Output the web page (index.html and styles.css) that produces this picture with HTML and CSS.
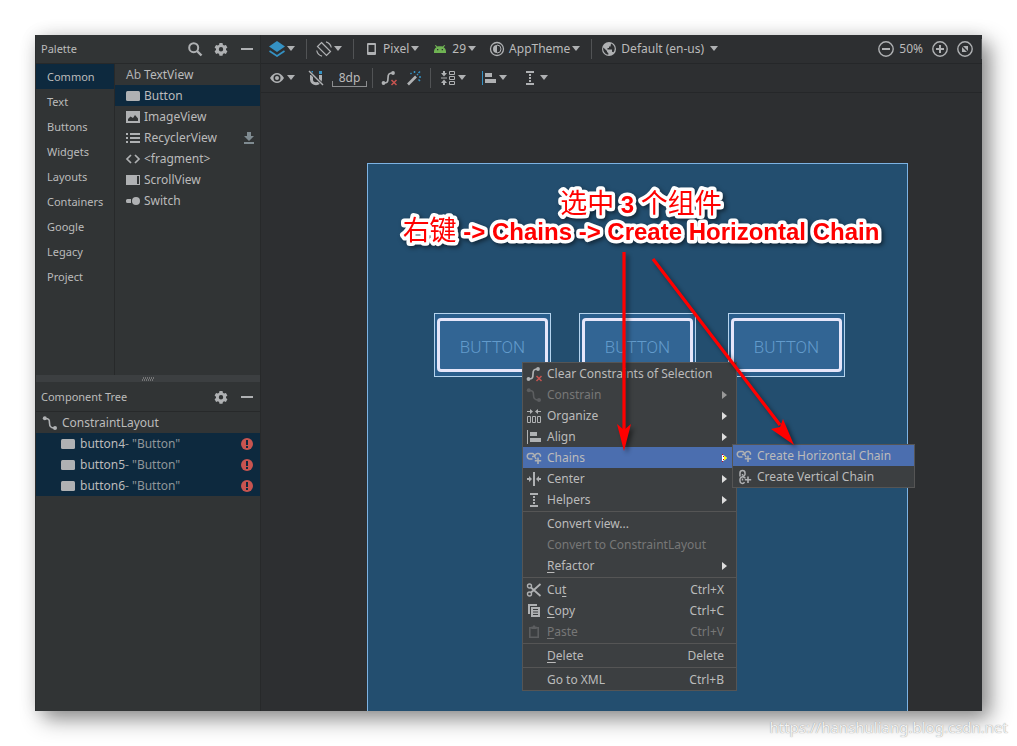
FILE: index.html
```html
<!DOCTYPE html>
<html lang="en">
<head>
<meta charset="utf-8">
<title>Layout Editor</title>
<link rel="stylesheet" href="styles.css">
</head>
<body>
<svg class="sprite" aria-hidden="true">
  <symbol id="caret" viewBox="0 0 8 5"><path d="M0 0h8L4 5z" fill="currentColor"/></symbol>
  <symbol id="arrow" viewBox="0 0 5 8"><path d="M0 0l5 4-5 4z" fill="currentColor"/></symbol>
  <symbol id="gear" viewBox="0 0 16 16"><path fill="currentColor" fill-rule="evenodd" d="M6.5 2h3l.4 1.8 1.2.7 1.8-.6 1.5 2.600-1.400 1.200v1.400l1.400 1.200-1.500 2.600-1.800-.6-1.200.7-.4 1.800h-3l-.4-1.800-1.200-.7-1.800.6-1.500-2.600L3 9.100V7.700L1.600 6.500l1.500-2.600 1.800.6 1.200-.7zM8 6a2.200 2.200 0 1 0 0 4.400A2.200 2.200 0 0 0 8 6z"/></symbol>
  <symbol id="minus" viewBox="0 0 16 16"><path d="M2 7h12v2H2z" fill="currentColor"/></symbol>
  <symbol id="box" viewBox="0 0 16 16"><rect x="1" y="3" width="14" height="10" rx="1.500" fill="currentColor"/></symbol>
  <symbol id="curve" viewBox="0 0 16 16"><path d="M3 3.500c4 0 4.500 1 4.500 4.500s1 5 5 5" fill="none" stroke="currentColor" stroke-width="1.600"/><circle cx="2.800" cy="3.300" r="2" fill="currentColor"/><circle cx="13" cy="13" r="2" fill="currentColor"/></symbol>
  <symbol id="clear" viewBox="0 0 16 16"><path d="M2.500 13c4 0 4.500-1 4.500-5s1-5 5-5" fill="none" stroke="currentColor" stroke-width="1.700"/><circle cx="2.500" cy="13" r="1.900" fill="currentColor"/><circle cx="12" cy="3" r="1.900" fill="currentColor"/><path d="M10.500 10l5 5m0-5l-5 5" stroke="#c75450" stroke-width="1.500"/></symbol>
  <symbol id="error" viewBox="0 0 12 12"><circle cx="6" cy="6" r="6" fill="#c75450"/><path d="M5 2h2v5H5zM5 8h2v2H5z" fill="#0d293e"/></symbol>
  <symbol id="align" viewBox="0 0 16 16"><path class="rule" d="M1 1h1v14H1z"/><path d="M4 3h7v4H4zM4 9h11v4H4z" fill="currentColor"/></symbol>
  <symbol id="helper" viewBox="0 0 16 16"><path d="M4 1h8v2H4zM4 13h8v2H4zM7 4h2v2H7zM7 7h2v2H7zM7 10h2v2H7z" fill="currentColor"/></symbol>
  <symbol id="chain" viewBox="0 0 16 16"><path d="M6.500 9H4a2.500 2.500 0 0 1 0-5.500h2.500C9 3.500 8.500 9 10.500 9M6 6.500h1.500c2 0 1.500-3 4-3h.5a2.500 2.500 0 0 1 2.400 3.200" fill="none" stroke="currentColor" stroke-width="1.500"/><path d="M11.200 7.500h1.600V10h2.400v1.600h-2.400V14h-1.600v-2.400H8.800V10h2.400z" fill="currentColor"/></symbol>
  <symbol id="vchain" viewBox="0 0 16 16"><path d="M4 7.500V4a2.500 2.500 0 0 1 5 0v1.500C9 8 4 7.500 4 10v2a2.400 2.400 0 0 0 4.500 1.200M6.500 5v1.500M6.500 9.500v2M7 8c1.200 0 2 .8 2 1.500" fill="none" stroke="currentColor" stroke-width="1.500"/><path d="M11.200 7.500h1.600V10h2.400v1.600h-2.400V14h-1.600v-2.400H8.800V10h2.400z" fill="currentColor"/></symbol>
</svg>

<main class="window">
  <aside class="side">
    <section class="palette">
      <header class="bar">
        <h2>Palette</h2>
        <button class="icon-btn" aria-label="Search"><svg class="icon" viewBox="0 0 16 16"><circle cx="6.700" cy="6.700" r="4.500" fill="none" stroke="currentColor" stroke-width="2"/><path d="M10 10l4.500 4.500" stroke="currentColor" stroke-width="2.400"/></svg></button>
        <button class="icon-btn" aria-label="Palette settings"><svg class="icon"><use href="#gear"/></svg></button>
        <button class="icon-btn" aria-label="Hide palette"><svg class="icon"><use href="#minus"/></svg></button>
      </header>
      <div class="palette-body">
        <nav class="groups">
          <button class="selected">Common</button>
          <button>Text</button>
          <button>Buttons</button>
          <button>Widgets</button>
          <button>Layouts</button>
          <button>Containers</button>
          <button>Google</button>
          <button>Legacy</button>
          <button>Project</button>
        </nav>
        <div class="widgets">
          <button class="row"><span class="ab">Ab</span>TextView</button>
          <button class="row selected"><svg class="icon"><use href="#box"/></svg>Button</button>
          <button class="row"><svg class="icon" viewBox="0 0 16 16"><path fill="currentColor" fill-rule="evenodd" d="M1 2h14v12H1zM3 12h10V9.500L10 6 8 9 5.500 7.500 3 10z"/></svg>ImageView</button>
          <button class="row"><svg class="icon" viewBox="0 0 16 16"><path fill="currentColor" d="M1 3h2v2H1zM5 3h10v2H5zM1 7h2v2H1zM5 7h10v2H5zM1 11h2v2H1zM5 11h10v2H5z"/></svg>RecyclerView<svg class="icon download" viewBox="0 0 16 16"><path fill="currentColor" d="M6 2h4v4h3L8 11 3 6h3zM3 12h10v2H3z"/></svg></button>
          <button class="row"><svg class="icon" viewBox="0 0 16 16"><path d="M6 4L2 8l4 4M10 4l4 4-4 4" fill="none" stroke="currentColor" stroke-width="1.700"/></svg>&lt;fragment&gt;</button>
          <button class="row"><svg class="icon" viewBox="0 0 16 16"><path fill="currentColor" fill-rule="evenodd" d="M1 3h14v10H1zM12 4v8h2V4z"/></svg>ScrollView</button>
          <button class="row"><svg class="icon" viewBox="0 0 16 16"><path fill="currentColor" d="M2.500 6H6v4H2.500A1.500 1.500 0 0 1 1 8.500v-1A1.500 1.500 0 0 1 2.500 6z"/><circle cx="11" cy="8" r="4" fill="currentColor"/></svg>Switch</button>
        </div>
      </div>
    </section>
    <div class="splitter"><svg viewBox="0 0 15 4"><path d="M1 3h1m1 0h1m1 0h1m1 0h1m1 0h1m1 0h1M2 1h1m1 0h1m1 0h1m1 0h1m1 0h1m1 0h1" stroke="#aaa" stroke-width="1"/></svg></div>
    <section class="tree">
      <header class="bar">
        <h2>Component Tree</h2>
        <button class="icon-btn" aria-label="Tree settings"><svg class="icon"><use href="#gear"/></svg></button>
        <button class="icon-btn" aria-label="Hide tree"><svg class="icon"><use href="#minus"/></svg></button>
      </header>
      <div class="nodes">
        <button class="row root"><svg class="icon"><use href="#curve"/></svg>ConstraintLayout</button>
        <button class="row child selected"><svg class="icon"><use href="#box"/></svg>button4<span class="value">- "Button"</span><svg class="error"><use href="#error"/></svg></button>
        <button class="row child selected"><svg class="icon"><use href="#box"/></svg>button5<span class="value">- "Button"</span><svg class="error"><use href="#error"/></svg></button>
        <button class="row child selected"><svg class="icon"><use href="#box"/></svg>button6<span class="value">- "Button"</span><svg class="error"><use href="#error"/></svg></button>
      </div>
    </section>
  </aside>

  <section class="editor">
    <div class="toolbar">
      <button class="tool" aria-label="Design surface"><svg class="icon" viewBox="0 0 16 16"><path d="M8 0l8 5.500L8 11 0 5.500z" fill="#3592c4"/><path d="M.5 10L8 15l7.500-5" fill="none" stroke="#3592c4" stroke-width="1.700"/></svg><svg class="caret"><use href="#caret"/></svg></button>
      <span class="sep"></span>
      <button class="tool" aria-label="Orientation"><svg class="icon" viewBox="0 0 16 16"><path d="M5.500 1.500l9 9-4 4-9-9zM10 .8A7.500 7.500 0 0 1 15.300 6.500M.7 9.500A7.500 7.500 0 0 0 6 15.200" fill="none" stroke="currentColor" stroke-width="1.200"/></svg><svg class="caret"><use href="#caret"/></svg></button>
      <span class="sep"></span>
      <button class="tool"><svg class="icon" viewBox="0 0 16 16"><path fill="currentColor" fill-rule="evenodd" d="M5 2h7a1 1 0 0 1 1 1v10a1 1 0 0 1-1 1H5a1 1 0 0 1-1-1V3a1 1 0 0 1 1-1zM5.500 4v7h6V4z"/></svg><span>Pixel</span><svg class="caret"><use href="#caret"/></svg></button>
      <button class="tool gap-m"><svg class="icon" viewBox="0 0 16 16"><path fill="#6fb353" fill-rule="evenodd" d="M2 12V10.500c0-2 1-3.500 2.400-4.300L2.800 4.500l.8-.6L5.500 5.600c1.500-.5 3.500-.5 5 0l1.900-1.700.8.6-1.600 1.700C13 7 14 8.500 14 10.500V12zM5 8v1.300h1.300V8zM9.700 8v1.300H11V8z"/></svg><span>29</span><svg class="caret"><use href="#caret"/></svg></button>
      <button class="tool gap-m"><svg class="icon" viewBox="0 0 16 16"><circle cx="8" cy="8" r="6.500" fill="none" stroke="currentColor" stroke-width="1.300"/><path d="M8 4a4 4 0 0 0 0 8z" fill="currentColor"/><path d="M8 4a4 4 0 0 1 0 8" fill="none" stroke="currentColor"/></svg><span>AppTheme</span><svg class="caret"><use href="#caret"/></svg></button>
      <span class="sep"></span>
      <button class="tool locale"><svg class="icon" viewBox="0 0 16 16"><circle cx="8" cy="8" r="7" fill="currentColor"/><path d="M2.300 6.500L6 10v1l1.300 1v1.800C4 13.500 1.500 10 2.300 6.500zM10 2.600c2 .8 3.600 2.700 3.700 5 0 1.500-.4 2.700-1.200 3.700l-1.500-.6V8.500H6.500V7H8V5.500h1.500z" fill="#2d2f31"/></svg><span>Default (en-us)</span><svg class="caret"><use href="#caret"/></svg></button>
      <div class="zoom">
        <button class="tool" aria-label="Zoom out"><svg class="icon" viewBox="0 0 16 16"><circle cx="8" cy="8" r="7.200" fill="none" stroke="currentColor" stroke-width="1.400"/><path d="M4 7h8v2H4z" fill="currentColor"/></svg></button>
        <span class="percent">50%</span>
        <button class="tool" aria-label="Zoom in"><svg class="icon" viewBox="0 0 16 16"><circle cx="8" cy="8" r="7.200" fill="none" stroke="currentColor" stroke-width="1.400"/><path d="M4 7h3V4h2v3h3v2H9v3H7V9H4z" fill="currentColor"/></svg></button>
        <button class="tool" aria-label="Zoom to fit"><svg class="icon" viewBox="0 0 16 16"><circle cx="8" cy="8" r="7.200" fill="none" stroke="currentColor" stroke-width="1.400"/><path d="M6 5h5v5zM5 6l5 5H5z" fill="currentColor"/></svg></button>
      </div>
    </div>
    <div class="toolbar">
      <button class="tool" aria-label="View options"><svg class="icon" viewBox="0 0 16 16"><path fill="currentColor" fill-rule="evenodd" d="M1 8c2-3.300 4.500-5 7-5s5 1.700 7 5c-2 3.300-4.500 5-7 5S3 11.300 1 8zM8 4.500a3.500 3.500 0 1 0 0 7 3.500 3.500 0 0 0 0-7z"/><circle cx="8" cy="8" r="2" fill="currentColor"/></svg><svg class="caret"><use href="#caret"/></svg></button>
      <button class="tool gap-m" aria-label="Autoconnect"><svg class="icon" viewBox="0 0 16 16"><path d="M3.500 5v4.500c0 5.500 9 5.500 9 0V5" fill="none" stroke="currentColor" stroke-width="3"/><path d="M11 1h3v3h-3z" fill="#3592c4"/><path d="M1 1l14 14" stroke="#2d2f31" stroke-width="3"/><path d="M1 1l14 14" stroke="currentColor" stroke-width="1.400"/><path d="M3 1h2v2z" fill="#3592c4"/></svg></button>
      <button class="margin-tool">8dp</button>
      <span class="sep tight"></span>
      <button class="tool" aria-label="Clear constraints"><svg class="icon"><use href="#clear"/></svg></button>
      <button class="tool gap-s" aria-label="Infer constraints"><svg class="icon" viewBox="0 0 16 16"><path d="M2 14.500l8-8" stroke="currentColor" stroke-width="2.600"/><path d="M8.500 3V1M12.500 3L14 1.500M13 7h2M12.500 9.500l1.500 1.500M5.500 4L4.500 3M11 5l1-1" stroke="#3592c4" stroke-width="1.500"/></svg></button>
      <span class="sep near"></span>
      <button class="tool" aria-label="Pack"><svg class="icon" viewBox="0 0 16 16"><path d="M3 1h2v2h2L4 6.500 1 3h2zM4 9.500L7 13H5v2H3v-2H1z" fill="currentColor"/><path d="M9.500 1.500h5v3h-5zM9.500 6.500h5v3h-5zM9.500 11.500h5v3h-5zM1 8h6" fill="none" stroke="currentColor"/></svg><svg class="caret"><use href="#caret"/></svg></button>
      <button class="tool gap-l blue-rule" aria-label="Align"><svg class="icon"><use href="#align"/></svg><svg class="caret"><use href="#caret"/></svg></button>
      <button class="tool gap-l" aria-label="Guidelines"><svg class="icon"><use href="#helper"/></svg><svg class="caret"><use href="#caret"/></svg></button>
    </div>

    <div class="canvas">
      <div class="blueprint"></div>
      <button class="widget first">BUTTON</button>
      <button class="widget middle">BUTTON</button>
      <button class="widget last">BUTTON</button>

      <div class="menu context" role="menu">
        <button role="menuitem"><svg class="icon"><use href="#clear"/></svg><span>Clear Constraints of Selection</span></button>
        <button role="menuitem" disabled><svg class="icon"><use href="#curve"/></svg><span>Constrain</span><svg class="more"><use href="#arrow"/></svg></button>
        <button role="menuitem"><svg class="icon" viewBox="0 0 16 16"><path d="M1 3h3V1l3 2.500L4 6V4H1zM15 3h-3V1L9 3.500 12 6V4h3z" fill="currentColor"/><path d="M1.500 8.500h3v6h-3zM6.500 8.500h3v6h-3zM11.500 8.500h3v6h-3z" fill="none" stroke="currentColor"/></svg><span>Organize</span><svg class="more"><use href="#arrow"/></svg></button>
        <button role="menuitem"><svg class="icon"><use href="#align"/></svg><span>Align</span><svg class="more"><use href="#arrow"/></svg></button>
        <button role="menuitem" class="active"><svg class="icon"><use href="#chain"/></svg><span>Chains</span><svg class="more" viewBox="0 0 5 8"><path d="M0 0l5 4-5 4z" fill="#fff"/><path d="M2 1.600L5 4 2 6.400z" fill="#ff0"/><path d="M0 0h1v1H0zM1 2h1v1H1zM1 5h1v1H1zM0 7h1v1H0z" fill="#d00020"/></svg></button>
        <button role="menuitem"><svg class="icon" viewBox="0 0 16 16"><path d="M7 1h2v14H7zM1 7h2V5l3 3-3 3V9H1zM15 7h-2V5l-3 3 3 3V9h2z" fill="currentColor"/></svg><span>Center</span><svg class="more"><use href="#arrow"/></svg></button>
        <button role="menuitem"><svg class="icon"><use href="#helper"/></svg><span>Helpers</span><svg class="more"><use href="#arrow"/></svg></button>
        <hr>
        <button role="menuitem"><i class="icon"></i><span>Convert view...</span></button>
        <button role="menuitem" disabled><i class="icon"></i><span>Convert to ConstraintLayout</span></button>
        <button role="menuitem"><i class="icon"></i><span><u>R</u>efactor</span><svg class="more"><use href="#arrow"/></svg></button>
        <hr>
        <button role="menuitem"><svg class="icon" viewBox="0 0 16 16"><circle cx="3.500" cy="4" r="2" fill="none" stroke="currentColor" stroke-width="1.400"/><circle cx="3.500" cy="12" r="2" fill="none" stroke="currentColor" stroke-width="1.400"/><path d="M5 5.500l9.500 8.500M5 10.500L14.500 2" stroke="currentColor" stroke-width="1.800"/></svg><span>Cu<u>t</u></span><kbd>Ctrl+X</kbd></button>
        <button role="menuitem"><svg class="icon" viewBox="0 0 16 16"><path d="M2 11V1h9v2H4v8z" fill="currentColor"/><path fill="currentColor" fill-rule="evenodd" d="M5 4h9v10H5zM7 6v1h5V6zM7 8.500v1h5v-1zM7 11v1h5v-1z"/></svg><span><u>C</u>opy</span><kbd>Ctrl+C</kbd></button>
        <button role="menuitem" disabled><svg class="icon" viewBox="0 0 16 16"><path d="M3.800 3.800h8.400v9.400H3.800z" fill="none" stroke="currentColor" stroke-width="1.600"/><path d="M5.500 2.500h1.500v-1h2v1h1.500V5h-5z" fill="currentColor"/></svg><span><u>P</u>aste</span><kbd>Ctrl+V</kbd></button>
        <hr>
        <button role="menuitem"><i class="icon"></i><span><u>D</u>elete</span><kbd>Delete</kbd></button>
        <hr>
        <button role="menuitem"><i class="icon"></i><span>Go to XML</span><kbd>Ctrl+B</kbd></button>
      </div>

      <div class="menu submenu" role="menu">
        <button role="menuitem" class="active"><svg class="icon"><use href="#chain"/></svg><span>Create Horizontal Chain</span></button>
        <button role="menuitem"><svg class="icon"><use href="#vchain"/></svg><span>Create Vertical Chain</span></button>
      </div>

      <svg class="annotation" viewBox="261 93 721 618">
        <g class="note">
          <text x="641" y="213"><tspan class="han">选中</tspan> 3 <tspan class="han">个组件</tspan></text>
          <text x="641" y="240"><tspan class="han">右键</tspan> -&gt; Chains -&gt; Create Horizontal Chain</text>
        </g>
        <g class="pointers" fill="#f00" stroke="#f00">
          <path d="M624 252v180M653 259l127 166" stroke-width="3.200" fill="none"/>
          <path d="M624 451l-7-27 7 6 7-6zM794 445l-23-16 9-2 3-8z" stroke="none"/>
        </g>
      </svg>
    </div>
  </section>
</main>
<footer class="watermark">https://hanshuliang.blog.csdn.net</footer>
</body>
</html>
```
FILE: styles.css
```css
* { box-sizing: border-box; }

body {
  margin: 0;
  min-height: 100vh;
  padding: 35px;
  background: #fff;
  color: #bbb;
  font: 12px/20px "Noto Sans", "Noto Sans CJK SC", sans-serif;
  position: relative;
}

button {
  margin: 0;
  padding: 0;
  border: 0;
  background: none;
  color: inherit;
  font: inherit;
  text-align: left;
  white-space: nowrap;
}

.sprite { position: absolute; width: 0; height: 0; }
.icon { width: 16px; height: 16px; flex: none; color: #afb1b3; }
.caret { width: 8px; height: 5px; flex: none; color: #afb1b3; }
.rule { fill: var(--rule, currentColor); }
.blue-rule { --rule: #3592c4; }
.selected { background: #0d293e; }

.window {
  display: grid;
  grid-template-columns: 226px minmax(0, 1fr);
  min-height: calc(100vh - 70px);
  background: #2d2f31;
  box-shadow: 8px 8px 20px rgba(0, 0, 0, .45), 0 0 16px rgba(0, 0, 0, .08);
}

/* Side panels */
.side {
  display: flex;
  flex-direction: column;
  background: #313435;
  border-left: 1px solid #2b2d2e;
  border-right: 1px solid #27292a;
}
.palette { display: flex; flex-direction: column; height: 340px; }
.bar {
  display: flex;
  align-items: center;
  gap: 10px;
  height: 29px;
  padding: 0 5px;
  border-bottom: 1px solid #27292a;
}
.bar h2 { flex: 1; margin: 0; font-size: 11px; font-weight: 400; }
.icon-btn { display: flex; }
.palette-body { display: grid; grid-template-columns: 79px 1fr; flex: 1; }
.groups {
  display: flex;
  flex-direction: column;
  border-right: 1px solid #27292a;
  font-size: 11px;
}
.groups button { height: 25px; padding-left: 11px; }
.row {
  display: flex;
  align-items: center;
  gap: 3px;
  width: 100%;
  height: 21px;
  padding: 0 3px 0 10px;
}
.ab { padding-left: 1px; color: #afb1b3; }
.download { margin-left: auto; color: #7f8b91; }
.splitter {
  display: flex;
  justify-content: center;
  align-items: center;
  height: 7px;
  background: #3c3f41;
}
.splitter svg { width: 15px; height: 4px; }
.tree .bar { height: 30px; }
.root { padding-left: 6px; gap: 4px; }
.child { padding: 0 7px 0 24px; gap: 4px; }
.value { margin-left: -4px; color: #8f9699; }
.error { width: 12px; height: 12px; margin-left: auto; }

/* Toolbars */
.editor { display: flex; flex-direction: column; min-width: 0; }
.toolbar {
  display: flex;
  align-items: center;
  height: 29px;
  padding-left: 8px;
  border-bottom: 1px solid #252729;
}
.tool { display: flex; align-items: center; gap: 2px; }
.tool span { margin-left: 2px; }
.tool .caret { margin-top: -2px; }
.locale .caret { margin-left: 4px; }
.gap-s { margin-left: 9px; }
.gap-m { margin-left: 13px; }
.gap-l { margin-left: 15px; }
.sep { width: 1px; height: 20px; margin: 0 9px 0 11px; background: #515355; }
.tight { margin: 0 8px 0 5px; }
.near { margin: 0 9px 0 8px; }
.margin-tool {
  width: 35px;
  height: 17px;
  margin-left: 8px;
  border: 1px solid;
  border-top: 0;
  border-image: linear-gradient(transparent 65%, #8c8e90 65%) 1;
  text-align: center;
  line-height: 14px;
}
.zoom {
  display: flex;
  align-items: center;
  margin-left: auto;
  padding-right: 8px;
  gap: 9px;
  border-right: 1px solid #515355;
}
.percent { margin: 0 0 0 -4px; }

/* Design canvas */
.canvas { position: relative; flex: 1; min-height: 618px; overflow: hidden; }
.blueprint {
  position: absolute;
  inset: 70px 74px 0 106px;
  background: #234e6f;
  border: 1px solid #7db3e3;
  border-bottom: 0;
}
.widget {
  position: absolute;
  top: 220px;
  width: 117px;
  height: 64px;
  padding-top: 4px;
  border: 1px solid #b5d4ee;
  background: #2a5e8c;
  color: #629bcc;
  font: 300 17px/20px Roboto, sans-serif;
  text-align: center;
  z-index: 0;
}
.widget::before {
  content: "";
  position: absolute;
  inset: 4px 2px;
  border: 3px solid #e6e6fa;
  border-radius: 4px;
  background: #326594;
  z-index: -1;
}
.first { left: 173px; }
.middle { left: 318px; }
.last { left: 467px; }

/* Menus */
.menu {
  position: absolute;
  border: 1px solid #555;
  background: #3c3f41;
  z-index: 1;
}
.context { left: 261px; top: 269px; width: 215px; }
.submenu { left: 471px; top: 351px; width: 183px; }
.menu button {
  display: flex;
  align-items: center;
  gap: 5px;
  width: 100%;
  height: 21px;
  padding: 0 12px 0 3px;
}
.menu button:disabled { color: #777; }
.menu button:disabled .icon { color: #5c5e60; }
.menu .active { background: #4b6eaf; }
.menu hr { height: 1px; margin: 1px 0; border: 0; background: #555; }
.menu u { text-underline-offset: 2px; }
.more { width: 5px; height: 8px; margin-left: auto; margin-right: -3px; color: #ddd; }
button:disabled .more { color: #999; }
kbd { margin-left: auto; font: inherit; }

/* Annotation */
.annotation {
  position: absolute;
  left: 0;
  top: 0;
  width: 721px;
  height: 618px;
  pointer-events: none;
  z-index: 2;
}
.note {
  fill: #f00;
  stroke: #fff;
  stroke-width: 7px;
  stroke-linejoin: round;
  paint-order: stroke fill;
  font: 700 24px "Liberation Sans", "Noto Sans CJK SC", sans-serif;
  text-anchor: middle;
  filter: drop-shadow(2px 2px 2px rgba(0, 0, 0, .5));
}
.han { font-size: 27px; font-weight: 400; }
.pointers { filter: drop-shadow(3px 3px 2px rgba(0, 0, 0, .45)); }

.watermark {
  position: absolute;
  right: 9px;
  bottom: 9px;
  color: #f2f2f2;
  font: 15px/20px "Noto Sans", sans-serif;
  text-shadow: 0 0 1px rgba(100, 100, 100, .8);
}
```
